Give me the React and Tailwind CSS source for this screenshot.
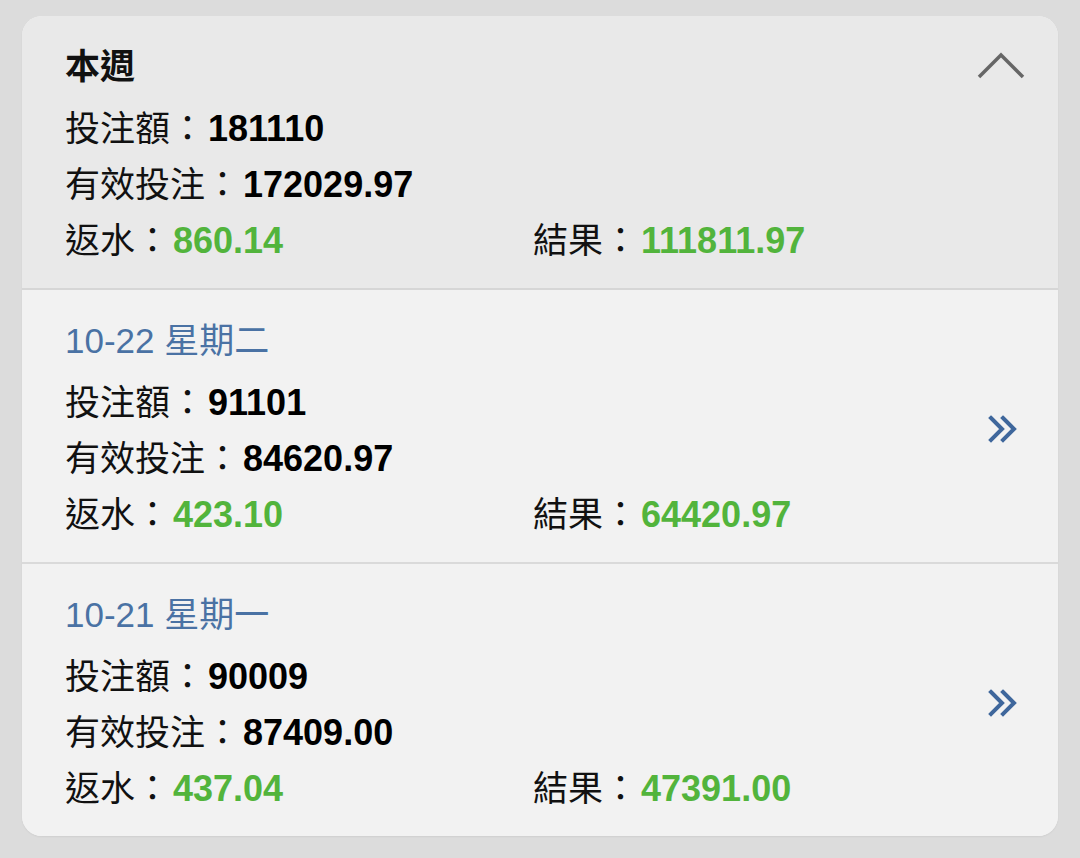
import React from "react";

const font = { fontFamily: '"Liberation Sans", Arial, "Noto Sans CJK TC", sans-serif' };

function Line({ label, value, green }) {
  return (
    <div className="flex items-center h-[56px] whitespace-nowrap">
      <span>{label}：</span>
      <span className={green ? "ml-[3px] font-bold text-[36px] text-[#52b43c]" : "ml-[3px] font-bold text-[36px] text-black"}>{value}</span>
    </div>
  );
}

function Block({ title, titleClass, bet, valid, rebate, result, icon, bg }) {
  return (
    <div className={`flex items-center ${bg} pl-[43px] pr-[37px] pt-[23px] pb-[19px]`}>
      <div className="flex-1">
        <div className={`flex items-center h-[56px] mb-[6px] ${titleClass}`}>{title}</div>
        <Line label="投注額" value={bet} />
        <Line label="有效投注" value={valid} />
        <div className="flex">
          <div className="w-[468px]">
            <Line label="返水" value={rebate} green />
          </div>
          <Line label="結果" value={result} green />
        </div>
      </div>
      {icon}
    </div>
  );
}

const DoubleChevron = (
  <svg width="34" height="30" viewBox="0 0 34 30" className="self-center mt-[2px]" fill="none" stroke="#3f679c" strokeWidth="4" strokeLinecap="square">
    <path d="M4 4 L15 15 L4 26" />
    <path d="M16 4 L27 15 L16 26" />
  </svg>
);

export default function App() {
  return (
    <div className="w-[1080px] h-[858px] bg-[#dcdcdc] pt-[16px] px-[22px]" style={font}>
      <div className="rounded-[20px] overflow-hidden bg-[#f2f2f2] text-[35px] text-[#111] shadow-[0_1px_2px_rgba(0,0,0,0.06)]">
        <div className="relative">
          <Block
            bg="bg-[#e9e9e9]"
            title="本週"
            titleClass="font-bold text-[#111]"
            bet="181110"
            valid="172029.97"
            rebate="860.14"
            result="111811.97"
          />
          <svg width="50" height="30" viewBox="0 0 50 30" className="absolute right-[32px] top-[35px]" fill="none" stroke="#666" strokeWidth="3.5">
            <path d="M3 26 L25 4 L47 26" />
          </svg>
        </div>
        <div className="h-[2px] bg-[#d6d6d6]" />
        <Block
          bg="bg-[#f2f2f2]"
          title="10-22 星期二"
          titleClass="text-[#4a72a4]"
          bet="91101"
          valid="84620.97"
          rebate="423.10"
          result="64420.97"
          icon={DoubleChevron}
        />
        <div className="h-[2px] bg-[#dadada]" />
        <Block
          bg="bg-[#f2f2f2]"
          title="10-21 星期一"
          titleClass="text-[#4a72a4]"
          bet="90009"
          valid="87409.00"
          rebate="437.04"
          result="47391.00"
          icon={DoubleChevron}
        />
      </div>
    </div>
  );
}
